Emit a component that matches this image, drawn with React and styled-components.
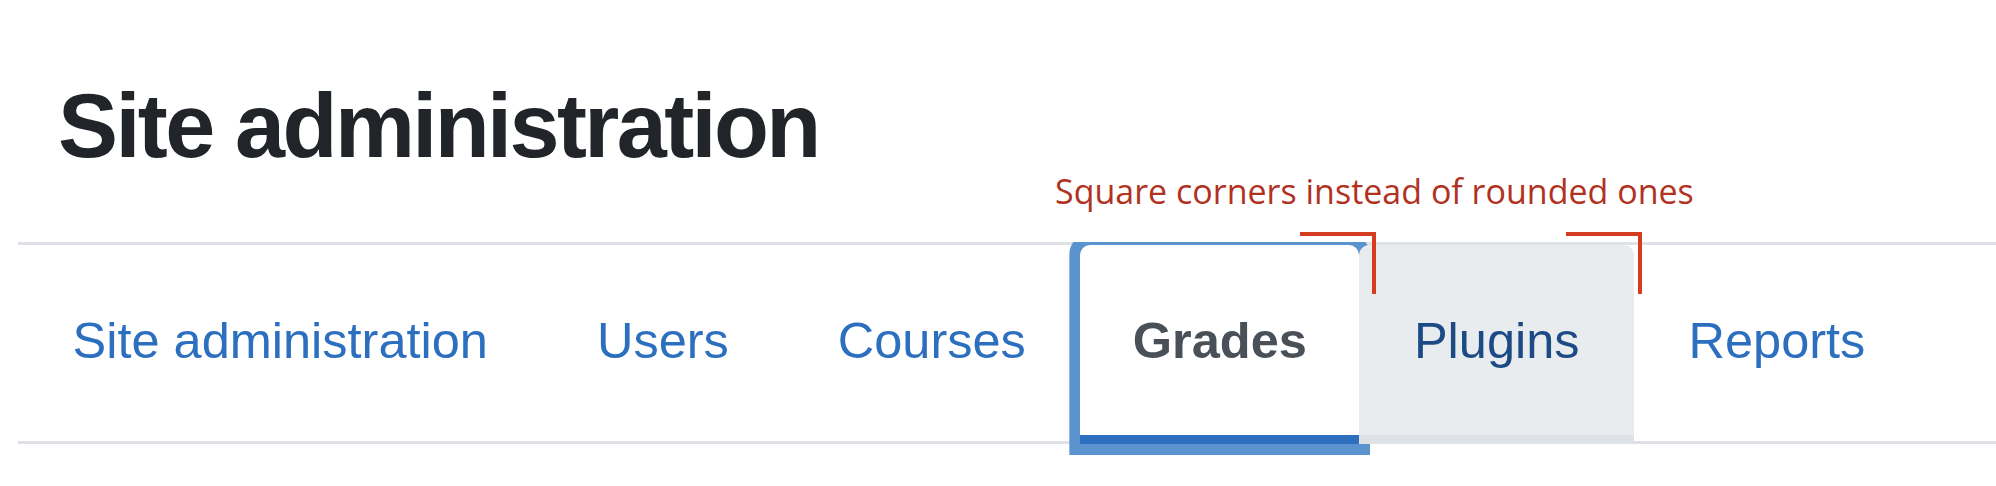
import React from 'react';
import styled, { createGlobalStyle } from 'styled-components';

// ----- STYLED COMPONENTS START -----
const GlobalStyle = createGlobalStyle`
  html, body {
    margin: 0;
    padding: 0;
    background: #fff;
  }
  body {
    font-family: "Liberation Sans", Arial, sans-serif;
  }
`;

const Page = styled.div`
  position: relative;
  width: 1996px;
  height: 486px;
  padding: 81px 0 0 18px;
  box-sizing: border-box;
  overflow: hidden;
`;
Page.displayName = 'Page';

const Title = styled.h1`
  margin: 0 0 71px 40px;
  font-size: 90px;
  line-height: 1;
  font-weight: 700;
  letter-spacing: -2.6px;
  color: #212529;
`;
Title.displayName = 'Title';

const Nav = styled.nav`
  display: flex;
  align-items: stretch;
  border-top: 3px solid #dee2e6;
  border-bottom: 3px solid #dee2e6;
`;
Nav.displayName = 'Nav';

const Tab = styled.a`
  display: flex;
  align-items: center;
  height: 190px;
  margin-bottom: -3px;
  padding: 0 ${({ active }) => (active ? 52.5 : 54.5)}px;
  border-bottom: 9px solid transparent;
  border-radius: 10px 10px 0 0;
  font-size: 50.5px;
  color: #2c6fbf;
  white-space: nowrap;
  text-decoration: none;

  ${({ active }) => active && `
    position: relative;
    background: #fff;
    color: #495057;
    font-weight: 700;
    border-bottom-color: #2e6fbf;
    box-shadow: 0 0 0 11px #5b93ce;
    clip-path: inset(-3px -11px -11px -11px);
  `}

  ${({ hovered }) => hovered && `
    position: relative;
    z-index: 1;
    background: #e9ecef;
    color: #1c4a84;
    border-bottom-color: #dee2e6;
  `}
`;
Tab.displayName = 'Tab';

const Note = styled.div`
  position: absolute;
  left: 1055px;
  top: 167px;
  font-family: "Open Sans", "Noto Sans", sans-serif;
  font-size: 34px;
  line-height: 48px;
  color: #b0321f;
  white-space: nowrap;
`;
Note.displayName = 'Note';

const Corner = styled.div`
  position: absolute;
  top: 232px;
  left: ${({ left }) => left}px;
  width: 72px;
  height: 58px;
  border-top: 4px solid #d63c20;
  border-right: 4px solid #d63c20;
  z-index: 2;
`;
Corner.displayName = 'Corner';
// ----- STYLED COMPONENTS END -----

const tabs = [
  { label: 'Site administration' },
  { label: 'Users' },
  { label: 'Courses' },
  { label: 'Grades', active: true },
  { label: 'Plugins', hovered: true },
  { label: 'Reports' },
];

export default function App() {
  return (
    <>
      <GlobalStyle />
      <Page>
        <Title>Site administration</Title>

        <Nav>
          {tabs.map((tab) => (
            <Tab
              key={tab.label}
              href="#"
              active={tab.active}
              hovered={tab.hovered}
            >
              {tab.label}
            </Tab>
          ))}
        </Nav>

        <Note>Square corners instead of rounded ones</Note>
        <Corner left={1300} />
        <Corner left={1566} />
      </Page>
    </>
  );
}
